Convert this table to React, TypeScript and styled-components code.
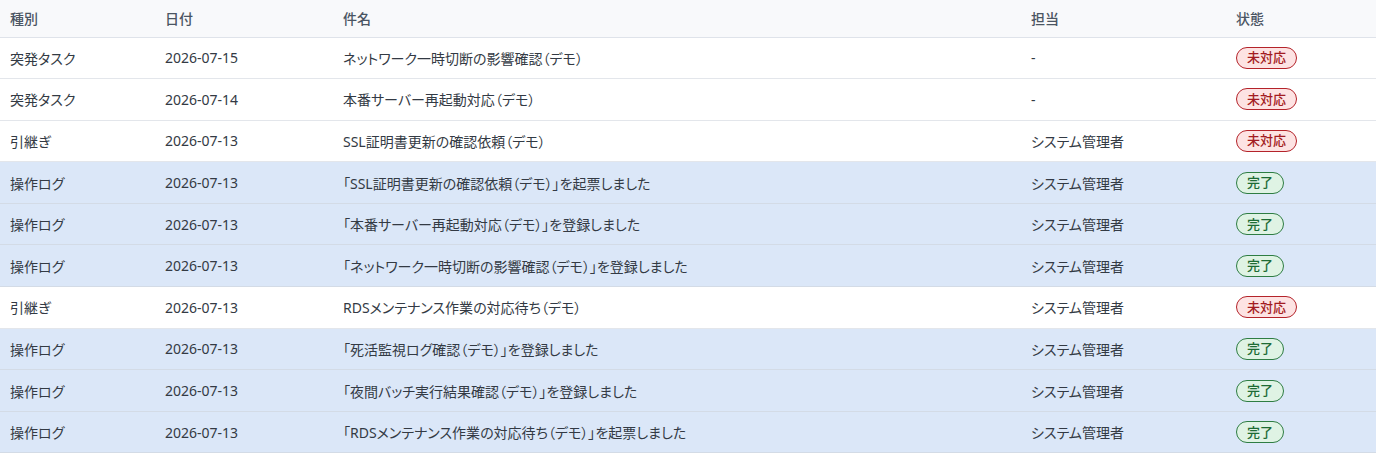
import React from "react";
import styled, { createGlobalStyle } from "styled-components";

const Global = createGlobalStyle`
  html, body { margin: 0; padding: 0; background: #ffffff; }
  body { font-family: "Noto Sans", "Noto Sans CJK JP", sans-serif; }
`;

type Status = "open" | "done";
type Row = { kind: string; date: string; subject: string; owner: string; status: Status; log?: boolean };

const rows: Row[] = [
  { kind: "突発タスク", date: "2026-07-15", subject: "ネットワーク一時切断の影響確認（デモ）", owner: "-", status: "open" },
  { kind: "突発タスク", date: "2026-07-14", subject: "本番サーバー再起動対応（デモ）", owner: "-", status: "open" },
  { kind: "引継ぎ", date: "2026-07-13", subject: "SSL証明書更新の確認依頼（デモ）", owner: "システム管理者", status: "open" },
  { kind: "操作ログ", date: "2026-07-13", subject: "「SSL証明書更新の確認依頼（デモ）」を起票しました", owner: "システム管理者", status: "done", log: true },
  { kind: "操作ログ", date: "2026-07-13", subject: "「本番サーバー再起動対応（デモ）」を登録しました", owner: "システム管理者", status: "done", log: true },
  { kind: "操作ログ", date: "2026-07-13", subject: "「ネットワーク一時切断の影響確認（デモ）」を登録しました", owner: "システム管理者", status: "done", log: true },
  { kind: "引継ぎ", date: "2026-07-13", subject: "RDSメンテナンス作業の対応待ち（デモ）", owner: "システム管理者", status: "open" },
  { kind: "操作ログ", date: "2026-07-13", subject: "「死活監視ログ確認（デモ）」を登録しました", owner: "システム管理者", status: "done", log: true },
  { kind: "操作ログ", date: "2026-07-13", subject: "「夜間バッチ実行結果確認（デモ）」を登録しました", owner: "システム管理者", status: "done", log: true },
  { kind: "操作ログ", date: "2026-07-13", subject: "「RDSメンテナンス作業の対応待ち（デモ）」を起票しました", owner: "システム管理者", status: "done", log: true },
];

const Table = styled.table`
  width: 100%;
  border-collapse: collapse;
  table-layout: fixed;
  font-size: 14px;
  color: #333a44;
  font-feature-settings: "palt";
`;

const HeadRow = styled.tr`
  background: #f8f9fb;
  height: 37px;
  border-bottom: 1px solid #dfe3ea;
`;

const Th = styled.th`
  text-align: left;
  font-weight: 500;
  color: #4b5563;
  padding: 0 10px;
  font-size: 14px;
`;

const BodyRow = styled.tr<{ $log?: boolean }>`
  height: 41.6px;
  background: ${(p) => (p.$log ? "#dbe7f8" : "#ffffff")};
  border-bottom: 1px solid ${(p) => (p.$log ? "#d3dbe6" : "#e3e6eb")};
`;

const Td = styled.td`
  padding: 0 10px;
  white-space: nowrap;
  vertical-align: middle;
`;

const Badge = styled.span<{ $status: Status }>`
  display: inline-flex;
  align-items: center;
  justify-content: center;
  height: 22px;
  box-sizing: border-box;
  padding: 0 10px;
  border-radius: 999px;
  font-size: 13px;
  font-weight: 500;
  line-height: 1;
  font-feature-settings: normal;
  border: 1px solid ${(p) => (p.$status === "open" ? "#b4232a" : "#2e7d43")};
  background: ${(p) => (p.$status === "open" ? "#fde3e3" : "#dff3e4")};
  color: ${(p) => (p.$status === "open" ? "#a31b22" : "#1d6b34")};
`;

export default function App() {
  return (
    <>
      <Global />
      <Table>
        <colgroup>
          <col style={{ width: 155 }} />
          <col style={{ width: 178 }} />
          <col style={{ width: 688 }} />
          <col style={{ width: 205 }} />
          <col />
        </colgroup>
        <thead>
          <HeadRow>
            <Th>種別</Th>
            <Th>日付</Th>
            <Th>件名</Th>
            <Th>担当</Th>
            <Th>状態</Th>
          </HeadRow>
        </thead>
        <tbody>
          {rows.map((r, i) => (
            <BodyRow key={i} $log={r.log}>
              <Td>{r.kind}</Td>
              <Td>{r.date}</Td>
              <Td>{r.subject}</Td>
              <Td>{r.owner}</Td>
              <Td>
                <Badge $status={r.status}>{r.status === "open" ? "未対応" : "完了"}</Badge>
              </Td>
            </BodyRow>
          ))}
        </tbody>
      </Table>
    </>
  );
}
